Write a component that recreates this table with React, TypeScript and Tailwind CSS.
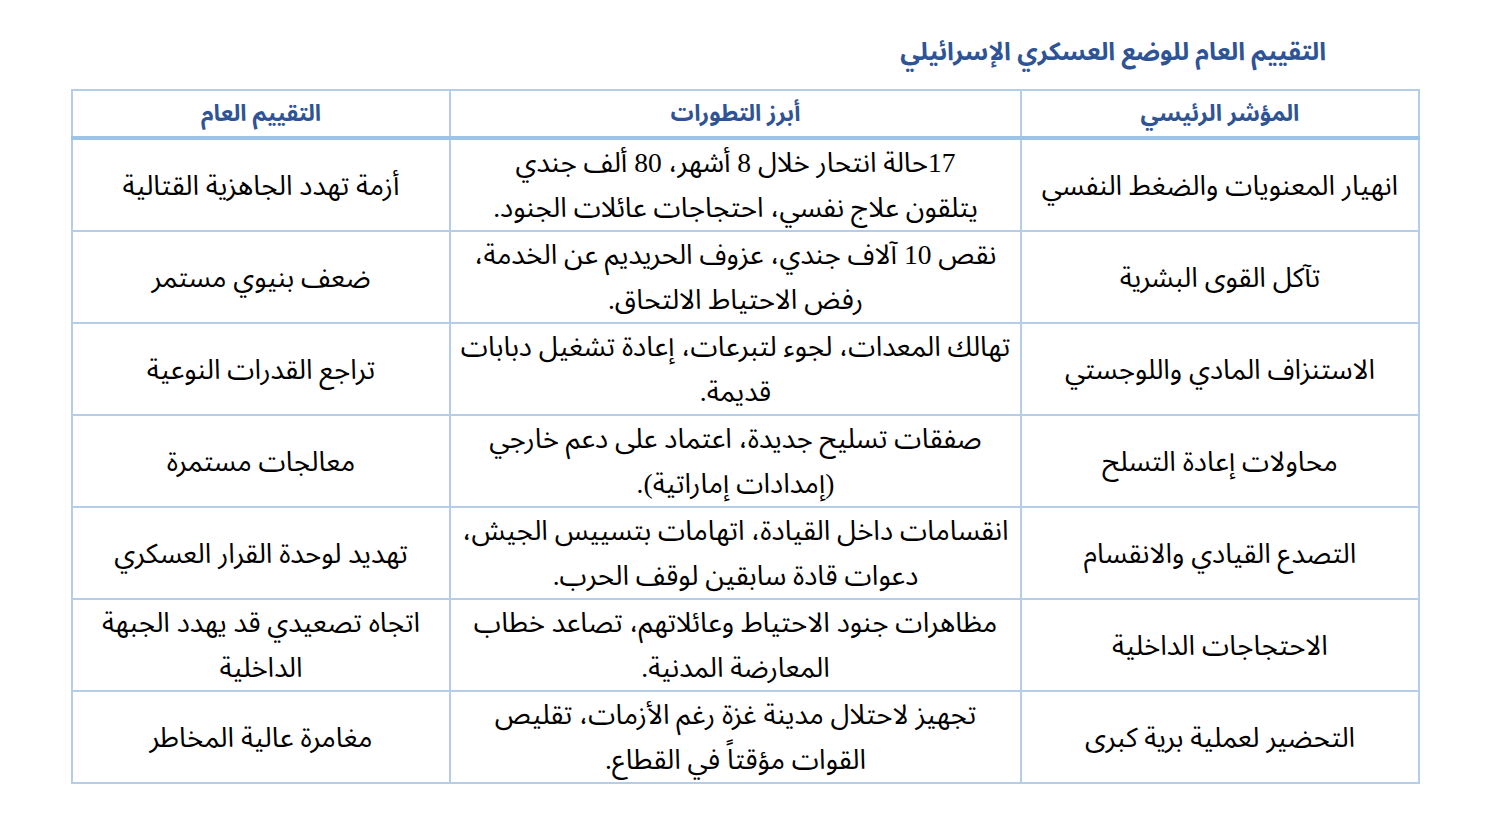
import React from "react";

const rows: [string[], string[], string[]][] = [
  [["انهيار المعنويات والضغط النفسي"], ["17حالة انتحار خلال 8 أشهر، 80 ألف جندي", "يتلقون علاج نفسي، احتجاجات عائلات الجنود."], ["أزمة تهدد الجاهزية القتالية"]],
  [["تآكل القوى البشرية"], ["نقص 10 آلاف جندي، عزوف الحريديم عن الخدمة،", "رفض الاحتياط الالتحاق."], ["ضعف بنيوي مستمر"]],
  [["الاستنزاف المادي واللوجستي"], ["تهالك المعدات، لجوء لتبرعات، إعادة تشغيل دبابات", "قديمة."], ["تراجع القدرات النوعية"]],
  [["محاولات إعادة التسلح"], ["صفقات تسليح جديدة، اعتماد على دعم خارجي", "(إمدادات إماراتية)."], ["معالجات مستمرة"]],
  [["التصدع القيادي والانقسام"], ["انقسامات داخل القيادة، اتهامات بتسييس الجيش،", "دعوات قادة سابقين لوقف الحرب."], ["تهديد لوحدة القرار العسكري"]],
  [["الاحتجاجات الداخلية"], ["مظاهرات جنود الاحتياط وعائلاتهم، تصاعد خطاب", "المعارضة المدنية."], ["اتجاه تصعيدي قد يهدد الجبهة", "الداخلية"]],
  [["التحضير لعملية برية كبرى"], ["تجهيز لاحتلال مدينة غزة رغم الأزمات، تقليص", "القوات مؤقتاً في القطاع."], ["مغامرة عالية المخاطر"]],
];

export default function App() {
  return (
    <div
      dir="rtl"
      className="w-[1501px] h-[832px] bg-white"
      style={{ fontFamily: '"Liberation Serif", "Noto Sans Arabic", "DejaVu Sans", serif' }}
    >
      <div className="pt-[30px] pr-[175px]">
        <h1 className="text-[25px] leading-[44px] font-bold text-[#2f5496]">
          التقييم العام للوضع العسكري الإسرائيلي
        </h1>
      </div>
      <div className="pr-[81px] pt-[15px]">
        <table className="border-collapse table-fixed w-[1347px] text-[27.5px] text-black">
          <colgroup>
            <col className="w-[398px]" />
            <col className="w-[571px]" />
            <col className="w-[378px]" />
          </colgroup>
          <thead>
            <tr className="h-[48px]">
              {["المؤشر الرئيسي", "أبرز التطورات", "التقييم العام"].map((h) => (
                <th
                  key={h}
                  className="border-2 border-[#b4cde9] border-b-4 border-b-[#9dc3e6] font-bold text-[23px] text-[#2f5496] text-center align-middle leading-[44px]"
                >
                  {h}
                </th>
              ))}
            </tr>
          </thead>
          <tbody>
            {rows.map((r, i) => (
              <tr key={i} className="h-[92px]">
                {r.map((c, j) => (
                  <td
                    key={j}
                    className="border-2 border-[#b4cde9] text-center align-middle leading-[45px] px-[6px] whitespace-nowrap"
                  >
                    {c.map((line, k) => (
                      <div key={k}>{line}</div>
                    ))}
                  </td>
                ))}
              </tr>
            ))}
          </tbody>
        </table>
      </div>
    </div>
  );
}
